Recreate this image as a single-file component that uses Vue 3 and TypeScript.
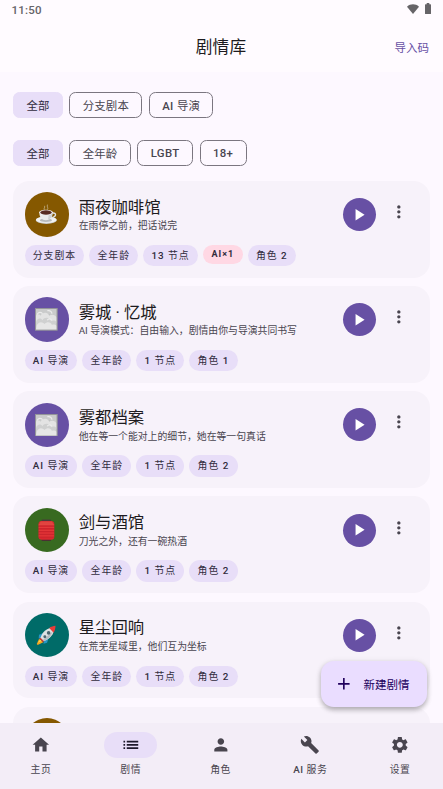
<script setup lang="ts">
import { h, type FunctionalComponent } from 'vue'

type Cover = 'coffee' | 'fog' | 'lantern' | 'rocket'

interface Tag {
  text: string
  alert?: boolean
}

interface Story {
  id: number
  title: string
  subtitle: string
  cover: Cover
  tone: string
  tags: Tag[]
}

interface NavItem {
  label: string
  path: string
  active?: boolean
}

// Label text: Latin runs are medium weight, Chinese runs stay regular.
const Label: FunctionalComponent<{ text: string }> = (props) =>
  h(
    'span',
    { class: 'label' },
    props.text
      .split(/([\x20-\x7e×]+)/)
      .filter(Boolean)
      .map((run) => (/^[\x20-\x7e×]/.test(run) ? h('b', { class: 'latin' }, run) : run)),
  )
Label.props = ['text']

const modes: string[] = ['全部', '分支剧本', 'AI 导演']
const ratings: string[] = ['全部', '全年龄', 'LGBT', '18+']

const directorTags = (roles: number): Tag[] => [
  { text: 'AI 导演' },
  { text: '全年龄' },
  { text: '1 节点' },
  { text: `角色 ${roles}` },
]

const stories: Story[] = [
  {
    id: 1,
    title: '雨夜咖啡馆',
    subtitle: '在雨停之前，把话说完',
    cover: 'coffee',
    tone: 'amber',
    tags: [
      { text: '分支剧本' },
      { text: '全年龄' },
      { text: '13 节点' },
      { text: 'AI×1', alert: true },
      { text: '角色 2' },
    ],
  },
  { id: 2, title: '雾城 · 忆城', subtitle: 'AI 导演模式：自由输入，剧情由你与导演共同书写', cover: 'fog', tone: 'violet', tags: directorTags(1) },
  { id: 3, title: '雾都档案', subtitle: '他在等一个能对上的细节，她在等一句真话', cover: 'fog', tone: 'violet', tags: directorTags(2) },
  { id: 4, title: '剑与酒馆', subtitle: '刀光之外，还有一碗热酒', cover: 'lantern', tone: 'green', tags: directorTags(2) },
  { id: 5, title: '星尘回响', subtitle: '在荒芜星域里，他们互为坐标', cover: 'rocket', tone: 'teal', tags: directorTags(2) },
  { id: 6, title: '', subtitle: '', cover: 'coffee', tone: 'amber', tags: [] },
]

const navItems: NavItem[] = [
  { label: '主页', path: 'M10 20v-6h4v6h5v-8h3L12 3 2 12h3v8z' },
  { label: '剧情', active: true, path: 'M3 13h2v-2H3v2zm0 4h2v-2H3v2zm0-8h2V7H3v2zm4 4h14v-2H7v2zm0 4h14v-2H7v2zM7 7v2h14V7H7z' },
  { label: '角色', path: 'M12 12c2.21 0 4-1.79 4-4s-1.79-4-4-4-4 1.79-4 4 1.79 4 4 4zm0 2c-2.67 0-8 1.34-8 4v2h16v-2c0-2.66-5.33-4-8-4z' },
  { label: 'AI 服务', path: 'M22.7 19l-9.1-9.1c.9-2.3.4-5-1.5-6.9-2-2-5-2.4-7.4-1.3L9 6 6 9 1.6 4.7C.4 7.1.9 10.1 2.9 12.1c1.9 1.9 4.6 2.4 6.9 1.5l9.1 9.1c.4.4 1 .4 1.4 0l2.3-2.3c.5-.4.5-1.1.1-1.4z' },
  { label: '设置', path: 'M19.14 12.94c.04-.3.06-.61.06-.94 0-.32-.02-.64-.07-.94l2.03-1.58c.18-.14.23-.41.12-.61l-1.92-3.32c-.12-.22-.37-.29-.59-.22l-2.39.96c-.5-.38-1.03-.7-1.62-.94l-.36-2.54c-.04-.24-.24-.41-.48-.41h-3.84c-.24 0-.43.17-.47.41l-.36 2.54c-.59.24-1.13.57-1.62.94l-2.39-.96c-.22-.08-.47 0-.59.22L2.74 8.87c-.12.21-.08.47.12.61l2.03 1.58c-.05.3-.09.63-.09.94s.02.64.07.94l-2.03 1.58c-.18.14-.23.41-.12.61l1.92 3.32c.12.22.37.29.59.22l2.39-.96c.5.38 1.03.7 1.62.94l.36 2.54c.05.24.24.41.48.41h3.84c.24 0 .44-.17.47-.41l.36-2.54c.59-.24 1.13-.56 1.62-.94l2.39.96c.22.08.47 0 .59-.22l1.92-3.32c.12-.22.07-.47-.12-.61l-2.01-1.58zM12 15.6c-1.98 0-3.6-1.62-3.6-3.6s1.62-3.6 3.6-3.6 3.6 1.62 3.6 3.6-1.62 3.6-3.6 3.6z' },
]
</script>

<template>
  <div class="screen">
    <header class="top">
      <div class="status">
        <span class="clock">11:50</span>
        <span class="indicators">
          <svg class="wifi" viewBox="0 0 12 10"><path d="M0 2.7C3.5-.5 8.5-.5 12 2.7L6 10z" /></svg>
          <svg class="battery" viewBox="0 0 6 11"><path d="M1.7 0h2.6v1.2h1.1q.6 0 .6.6v8.6q0 .6-.6.6H.6q-.6 0-.6-.6V1.8q0-.6.6-.6h1.1z" /></svg>
        </span>
      </div>
      <div class="appbar">
        <span class="side"></span>
        <h1>剧情库</h1>
        <button class="side import">导入码</button>
      </div>
    </header>

    <main class="content">
      <div class="filters">
        <button v-for="(m, i) in modes" :key="m" class="filter" :class="{ selected: i === 0 }"><Label :text="m" /></button>
      </div>
      <div class="filters second">
        <button v-for="(r, i) in ratings" :key="r" class="filter" :class="{ selected: i === 0 }"><Label :text="r" /></button>
      </div>

      <div class="list">
        <article v-for="s in stories" :key="s.id" class="card">
          <div class="summary">
            <div class="avatar" :class="s.tone">
              <svg v-if="s.cover === 'coffee'" viewBox="0 0 24 24">
                <ellipse cx="12" cy="18.4" rx="11.2" ry="3.8" fill="#c9cbcc" />
                <ellipse cx="12" cy="17.7" rx="11" ry="3.4" fill="#f1f2f2" />
                <ellipse cx="11.6" cy="18.3" rx="6.4" ry="1.8" fill="#b7babc" />
                <path d="M18.4 10.8c4.7-.9 4.8 4.3-1.4 4.8" fill="none" stroke="#e1e3e4" stroke-width="1.5" />
                <path d="M4.6 10.1c0 5.2 2.7 8.2 7 8.2s7.2-3 7.2-8.2z" fill="#e9ebeb" />
                <path d="M14.5 13c2-.4 3.2-1.2 4-2.3-.3 4-2 6.7-4.8 7.3z" fill="#cfd2d3" />
                <ellipse cx="11.7" cy="9.9" rx="7.2" ry="2.8" fill="#fafafa" />
                <ellipse cx="11.7" cy="10.1" rx="6.2" ry="2.3" fill="#562b22" />
                <path d="M10 7.5c-1.5-1.6 1.2-2.5.1-4.5m3 4.2c1.5-2-.8-3 .1-5.5" fill="none" stroke="#ded7c8" stroke-width=".9" opacity=".65" />
              </svg>
              <svg v-else-if="s.cover === 'fog'" viewBox="0 0 24 24">
                <rect x=".4" y=".4" width="23.2" height="23.2" fill="#b9bbbb" />
                <path d="M1 1h22v9c-2-3-5-2-6-1-1-3-5-4-7-1-3-1-5 0-6 2H1z" fill="#cacbcb" />
                <path d="M1 8c2-2 4-1 5 0 2-4 8-4 9 0 4-2 7 0 8 2v6H1z" fill="#e3e3e3" />
                <path d="M1 15c1-4 5-5 7-2 2-4 8-3 9 1 2-1 4-1 6 1v8H1z" fill="#cfd0d0" />
                <path d="M2 18c3-4 6-3 8-1 3-3 7-2 8 1 2-1 4 0 5 1v4H1z" fill="#e6e6e6" />
                <path d="M2 7c2-3 4-3 6-1m5-3c3-1 5 1 5 3m-5 7c1-2 4-2 5 0" fill="none" stroke="#ececec" stroke-width="1.2" />
                <rect x=".5" y=".5" width="23" height="23" fill="none" stroke="#949698" />
              </svg>
              <svg v-else-if="s.cover === 'lantern'" viewBox="0 0 24 24">
                <rect x="7" y=".5" width="10" height="3" rx="1" fill="#4a3a3b" />
                <rect x="7" y="20.5" width="10" height="3" rx="1" fill="#4a3033" />
                <rect x="3.7" y="2.2" width="16.8" height="19.8" rx="3.4" fill="#d8282f" />
                <path d="M6 2.6h12l2.4 4.4H3.8z" fill="#e04440" />
                <path d="M3.9 6h16.4M3.9 9h16.4M3.9 12h16.4M3.9 15h16.4M3.9 18h16.4" stroke="#ea4541" stroke-width=".7" />
                <path d="M3.9 7.3h16.4M3.9 10.3h16.4M3.9 13.3h16.4M3.9 16.3h16.4M3.9 19.3h16.4" stroke="#c0212b" stroke-width=".6" />
              </svg>
              <svg v-else class="rocket" viewBox="0 0 24 24">
                <path d="M3.6 16 .9 22.2l1.1 1 6.5-3z" fill="#f4a321" />
                <path d="m4.8 16.8-2.5 4 4.3-2.1z" fill="#ffdc48" />
                <path d="M3.5 15.2 5 13.5l5 5-1.8 1.6z" fill="#d13c37" />
                <path d="m8.8 9.2-5.3 2.2-.4 4.2 4.3-1.2zm6 5.8-1.9 5.6-4.2 1.2.8-4.5z" fill="#2696c4" />
                <path d="M5.2 14.8C7.3 8.1 12.5 3.3 21.7 2c-.6 9-5.5 14.3-12.4 16.7z" fill="#dfe2e3" />
                <path d="M15.4 3.6C17.8 2 20.2 1.2 22.7 1c0 2.8-.7 5.4-2.2 7.9z" fill="#e83c38" />
                <path d="m8 17.6 11.4-10c-1.7 5.6-5.3 9.2-10.1 11.1z" fill="#b6bdc1" />
                <circle cx="14.7" cy="9.2" r="2.1" fill="#4d6670" />
                <circle cx="10.3" cy="13.6" r="1.7" fill="#4d6670" />
              </svg>
            </div>
            <div class="text">
              <h2>{{ s.title }}</h2>
              <p>{{ s.subtitle }}</p>
            </div>
            <button class="play" aria-label="播放">
              <svg viewBox="0 0 24 24"><path d="M8 5v14l11-7z" /></svg>
            </button>
            <button class="more" aria-label="更多">
              <svg viewBox="0 0 24 24"><path d="M12 8c1.1 0 2-.9 2-2s-.9-2-2-2-2 .9-2 2 .9 2 2 2zm0 2c-1.1 0-2 .9-2 2s.9 2 2 2 2-.9 2-2-.9-2-2-2zm0 6c-1.1 0-2 .9-2 2s.9 2 2 2 2-.9 2-2-.9-2-2-2z" /></svg>
            </button>
          </div>
          <div class="tags">
            <span v-for="t in s.tags" :key="t.text" class="tag" :class="{ alert: t.alert }"><Label :text="t.text" /></span>
          </div>
        </article>
      </div>
    </main>

    <button class="fab">
      <svg viewBox="0 0 24 24"><path d="M19 13h-6v6h-2v-6H5v-2h6V5h2v6h6v2z" /></svg>
      <span>新建剧情</span>
    </button>

    <nav class="nav">
      <a v-for="n in navItems" :key="n.label" class="nav-item" :class="{ active: n.active }">
        <span class="pill"><svg viewBox="0 0 24 24"><path :d="n.path" /></svg></span>
        <span class="nav-label"><Label :text="n.label" /></span>
      </a>
    </nav>
  </div>
</template>

<style>
body {
  margin: 0;
  overflow: hidden;
}
</style>

<style scoped>
.screen {
  position: relative;
  display: flex;
  flex-direction: column;
  height: 100vh;
  overflow: hidden;
  background: #fdf8ff;
  color: #1d1b20;
  font-family: Roboto, 'Noto Sans CJK SC', sans-serif;
}
svg {
  display: block;
  fill: currentColor;
}
button {
  margin: 0;
  padding: 0;
  border: 0;
  background: none;
  font: inherit;
  color: inherit;
}
h1, h2, p {
  margin: 0;
  font-weight: 400;
  white-space: nowrap;
}
.label {
  white-space: pre;
}
:deep(.latin) {
  font-weight: 500;
}
.top {
  flex: none;
  height: 72px;
  background: #fffbff;
}
.status {
  display: flex;
  justify-content: space-between;
  height: 20px;
  padding: 0 12px 0 11.5px;
  box-sizing: border-box;
  color: #666468;
}
.clock {
  font-size: 11.5px;
  line-height: 20px;
  letter-spacing: 0.2px;
  font-weight: 500;
}
.indicators {
  display: flex;
  align-items: flex-start;
  gap: 6px;
  padding-top: 3px;
}
.wifi {
  width: 12px;
  height: 10px;
  margin-top: 1px;
}
.battery {
  width: 6px;
  height: 11px;
}
.appbar {
  display: flex;
  align-items: center;
  height: 53px;
  padding: 0 14px 0 13px;
}
h1 {
  margin-bottom: 2px;
  font-size: 16.7px;
  letter-spacing: 0.2px;
}
.side {
  flex: 1;
  text-align: right;
}
.import {
  font-size: 11.5px;
  color: #6750a4;
}
.content {
  flex: 1;
  min-height: 0;
  overflow: hidden;
  padding: 20px 13px 0;
}
.filters {
  display: flex;
  gap: 6.5px;
  height: 26.4px;
}
.second {
  margin-top: 21.4px;
}
.filter {
  box-sizing: border-box;
  padding: 0 12.4px;
  border: 1px solid #7b7680;
  border-radius: 6.5px;
  font-size: 11.4px;
  letter-spacing: 0.15px;
  color: #49454f;
}
.filter :deep(.latin) {
  letter-spacing: 0.35px;
}
.filter.selected {
  border-color: #e8def8;
  background: #e8def8;
  color: #312c3d;
}
.list {
  display: flex;
  flex-direction: column;
  gap: 8.3px;
  margin-top: 14.6px;
}
.card {
  flex: none;
  box-sizing: border-box;
  height: 96.9px;
  padding: 11.5px;
  border-radius: 16.4px;
  background: #f7f2fa;
}
.summary {
  display: flex;
  align-items: center;
  height: 44.4px;
}
.avatar {
  display: flex;
  align-items: center;
  justify-content: center;
  flex: none;
  width: 44.4px;
  height: 44.4px;
  border-radius: 50%;
}
.avatar svg {
  width: 22.6px;
  height: 22.6px;
}
.avatar .rocket {
  width: 20.6px;
  height: 20.6px;
}
.amber { background: #855800; }
.violet { background: #6750a4; }
.green { background: #386a20; }
.teal { background: #006b68; }
.text {
  flex: 1;
  min-width: 0;
  margin-left: 9.8px;
  padding-top: 2px;
}
h2 {
  font-size: 16.4px;
  line-height: 20px;
}
p {
  font-size: 9.85px;
  line-height: 15px;
  margin-top: 0.6px;
  color: #49454f;
}
.play {
  display: flex;
  align-items: center;
  justify-content: center;
  width: 33px;
  height: 33px;
  border-radius: 50%;
  background: #6750a4;
  color: #fff;
}
.play svg {
  width: 19.7px;
  height: 19.7px;
}
.more {
  margin: -5px 10px 0 13px;
  color: #49454f;
}
.more svg {
  width: 19.7px;
  height: 19.7px;
}
.tags {
  display: flex;
  align-items: flex-start;
  gap: 5px;
  margin-top: 8.2px;
}
.tag {
  height: 21.3px;
  padding: 0 8.2px;
  border-radius: 11px;
  background: #e8def8;
  font-size: 9.85px;
  line-height: 21.8px;
  letter-spacing: 1px;
  white-space: nowrap;
  color: #312c3d;
}
.tag.alert {
  height: 19.6px;
  padding: 0 8.6px;
  background: #ffd8e4;
  font-size: 9px;
  line-height: 19.6px;
}
.tag.alert :deep(.latin) {
  font-weight: 700;
}
.fab {
  position: absolute;
  right: 16.2px;
  bottom: 82.2px;
  display: flex;
  align-items: center;
  gap: 10px;
  width: 106.2px;
  height: 46px;
  box-sizing: border-box;
  padding-left: 13.2px;
  border-radius: 13px;
  background: #eaddff;
  color: #21005d;
  font-size: 11.5px;
  box-shadow: 0 3px 5px rgba(0, 0, 0, 0.24), 0 1px 6px rgba(0, 0, 0, 0.1);
}
.fab svg {
  width: 19.7px;
  height: 19.7px;
}
.nav {
  flex: none;
  display: flex;
  gap: 8px;
  box-sizing: border-box;
  height: 66px;
  padding: 9px 2px 0 0;
  background: #f3edf7;
  color: #49454f;
}
.nav-item {
  flex: 1 1 0;
  display: flex;
  flex-direction: column;
  align-items: center;
}
.pill {
  display: flex;
  align-items: center;
  justify-content: center;
  width: 52.6px;
  height: 26.4px;
  border-radius: 14px;
}
.pill svg {
  width: 19.7px;
  height: 19.7px;
}
.active .pill {
  background: #e8def8;
  color: #1d192b;
}
.nav-label {
  margin-top: 3.8px;
  font-size: 9.85px;
  line-height: 15px;
  letter-spacing: 0.5px;
  white-space: nowrap;
}
</style>
